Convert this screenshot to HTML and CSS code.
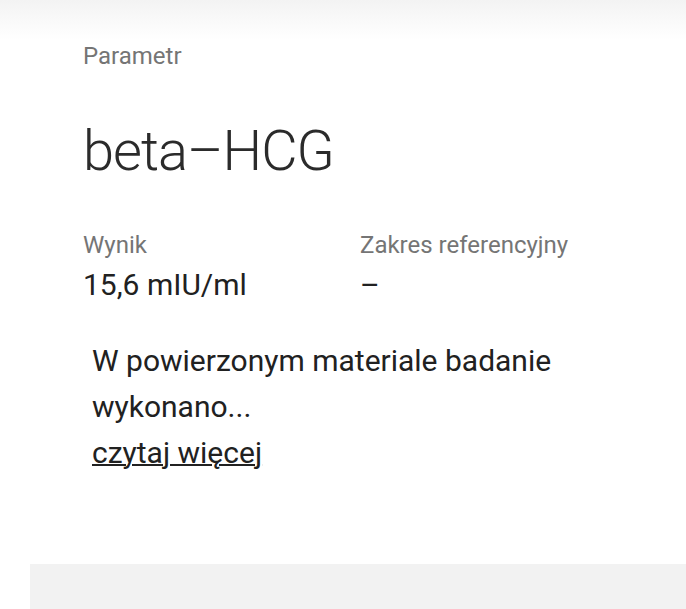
FILE: index.html
```html
<!DOCTYPE html>
<html lang="pl">
<head>
<meta charset="utf-8">
<title>beta–HCG</title>
<link rel="stylesheet" href="styles.css">
</head>
<body>
<div class="top-shadow"></div>
<main class="result">
  <div class="label">Parametr</div>
  <h1 class="name">beta–HCG</h1>
  <div class="cols">
    <div class="col">
      <div class="label">Wynik</div>
      <div class="value">15,6 mIU/ml</div>
    </div>
    <div class="col">
      <div class="label">Zakres referencyjny</div>
      <div class="value">–</div>
    </div>
  </div>
  <p class="desc">W powierzonym materiale badanie<br>wykonano...<br><a class="more" href="#">czytaj więcej</a></p>
</main>
<div class="bottom-block"></div>
</body>
</html>
```

FILE: styles.css
```css
html, body {
  margin: 0;
  padding: 0;
  background: #ffffff;
  font-family: Roboto, "Liberation Sans", sans-serif;
  overflow: hidden;
}

.top-shadow {
  height: 40px;
  background: linear-gradient(to bottom, #f3f3f3 0%, #f8f8f8 40%, #ffffff 100%);
}

.result {
  padding: 2px 0 0 83px;
}

.label {
  font-size: 24px;
  line-height: 28px;
  color: #757575;
}

.name {
  margin: 47px 0 0 0;
  font-size: 56px;
  line-height: 68px;
  font-weight: 300;
  letter-spacing: -1px;
  color: #2b2b2b;
}

.cols {
  display: grid;
  grid-template-columns: 277px 1fr;
  margin-top: 46px;
}

.value {
  margin-top: 9px;
  font-size: 30px;
  line-height: 34px;
  color: #212121;
}

.desc {
  margin: 36px 0 0 9px;
  font-size: 30px;
  line-height: 46px;
  color: #212121;
}

.more {
  color: #212121;
  text-decoration: underline;
  text-decoration-thickness: 2px;
}

.bottom-block {
  margin: 88px 0 0 30px;
  height: 60px;
  background: #f2f2f2;
}
```
